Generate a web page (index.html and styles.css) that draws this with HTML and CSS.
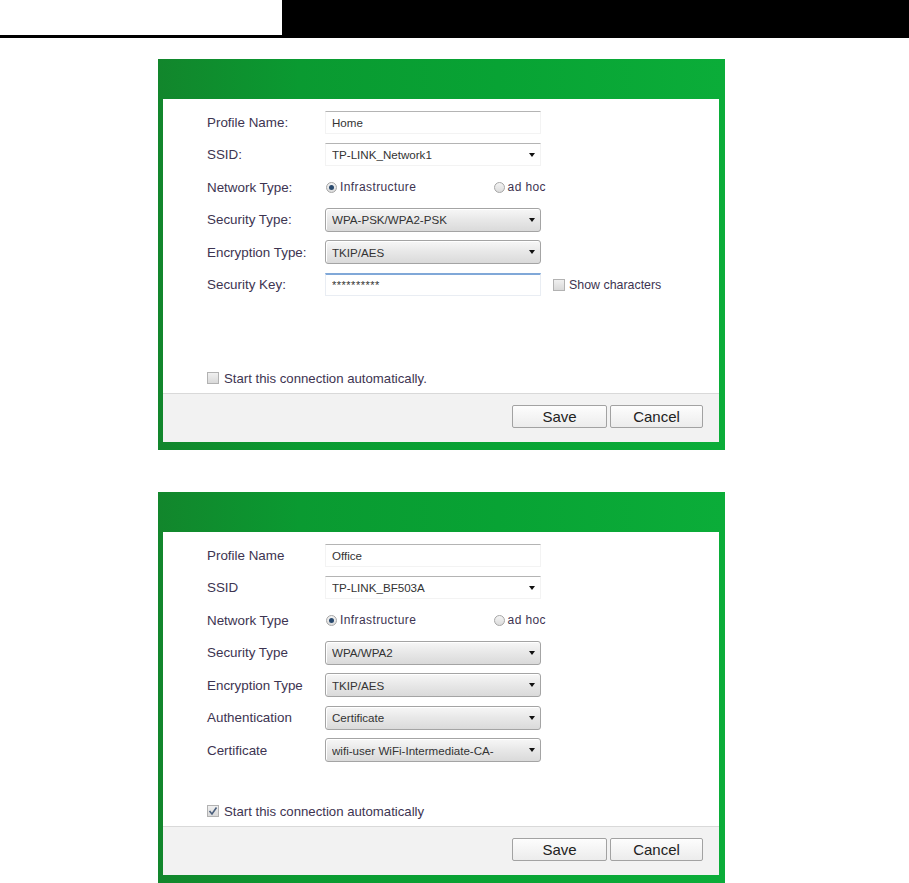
FILE: index.html
```html
<!DOCTYPE html>
<html lang="en">
<head>
    <meta charset="UTF-8">
    <title>Wireless Profile Settings</title>
    <link rel="stylesheet" href="styles.css">
</head>
<body>
    <!-- Page header strip -->
    <div class="doc-header">
        <div class="header-left"></div>
        <div class="header-bar"></div>
    </div>

    <!-- Profile: Home -->
    <div class="dialog">
        <div class="dialog-body">
            <div class="form-grid">
                <span class="label">Profile Name:</span>
                <div class="field field-text"><span class="value">Home</span></div>
                <span></span>

                <span class="label">SSID:</span>
                <div class="field field-text"><span class="value">TP-LINK_Network1</span><i class="arrow"></i></div>
                <span></span>

                <span class="label">Network Type:</span>
                <div class="radio-group">
                    <span class="radio-option"><i class="radio checked"></i>Infrastructure</span>
                    <span class="radio-option"><i class="radio"></i>ad hoc</span>
                </div>
                <span></span>

                <span class="label">Security Type:</span>
                <div class="field field-select"><span class="value">WPA-PSK/WPA2-PSK</span><i class="arrow"></i></div>
                <span></span>

                <span class="label">Encryption Type:</span>
                <div class="field field-select"><span class="value">TKIP/AES</span><i class="arrow"></i></div>
                <span></span>

                <span class="label">Security Key:</span>
                <div class="field field-key"><span class="value">**********</span></div>
                <span class="check-option side-option"><i class="checkbox"></i>Show characters</span>
            </div>

            <div class="check-option auto-start"><i class="checkbox"></i>Start this connection automatically.</div>
        </div>
        <div class="dialog-footer">
            <button class="btn btn-save">Save</button>
            <button class="btn btn-cancel">Cancel</button>
        </div>
    </div>

    <!-- Profile: Office -->
    <div class="dialog dialog-second">
        <div class="dialog-body">
            <div class="form-grid">
                <span class="label">Profile Name</span>
                <div class="field field-text"><span class="value">Office</span></div>
                <span></span>

                <span class="label">SSID</span>
                <div class="field field-text"><span class="value">TP-LINK_BF503A</span><i class="arrow"></i></div>
                <span></span>

                <span class="label">Network Type</span>
                <div class="radio-group">
                    <span class="radio-option"><i class="radio checked"></i>Infrastructure</span>
                    <span class="radio-option"><i class="radio"></i>ad hoc</span>
                </div>
                <span></span>

                <span class="label">Security Type</span>
                <div class="field field-select"><span class="value">WPA/WPA2</span><i class="arrow"></i></div>
                <span></span>

                <span class="label">Encryption Type</span>
                <div class="field field-select"><span class="value">TKIP/AES</span><i class="arrow"></i></div>
                <span></span>

                <span class="label">Authentication</span>
                <div class="field field-select"><span class="value">Certificate</span><i class="arrow"></i></div>
                <span></span>

                <span class="label">Certificate</span>
                <div class="field field-select"><span class="value">wifi-user WiFi-Intermediate-CA-</span><i class="arrow"></i></div>
                <span></span>
            </div>

            <div class="check-option auto-start">
                <i class="checkbox">
                    <svg width="10" height="10" viewBox="0 0 10 10"><polyline points="1.5,5 4,8 8.5,1.5" fill="none" stroke="#4b5f7c" stroke-width="1.6"/></svg>
                </i>Start this connection automatically
            </div>
        </div>
        <div class="dialog-footer">
            <button class="btn btn-save">Save</button>
            <button class="btn btn-cancel">Cancel</button>
        </div>
    </div>
</body>
</html>
```

FILE: styles.css
```css
/* Reset */
* {
    margin: 0;
    padding: 0;
    box-sizing: border-box;
}

body {
    background: #fff;
    font-family: 'Liberation Sans', Arial, sans-serif;
    color: #3d3451;
}

/* Header strip */
.doc-header {
    display: flex;
    height: 38px;
}

.header-left {
    width: 282px;
    border-bottom: 3px solid #000;
}

.header-bar {
    flex: 1;
    background: #000;
}

/* Dialog frame */
.dialog {
    width: 567px;
    height: 391px;
    margin: 21px 0 0 158px;
    padding: 40px 6px 8px 5px;
    display: flex;
    flex-direction: column;
    background: linear-gradient(to right, #12862c 0%, #0a9a31 25%, #08a334 60%, #0bad39 100%);
}

.dialog-second {
    margin-top: 42px;
}

.dialog-body {
    flex: 1;
    background: #fff;
    padding: 7px 0 7px 44px;
    display: flex;
    flex-direction: column;
}

/* Form rows */
.form-grid {
    display: grid;
    grid-template-columns: 118px 216px auto;
    grid-auto-rows: 32.5px;
    align-items: center;
}

.label {
    font-size: 13.4px;
    color: #3d3451;
    white-space: nowrap;
}

.field {
    width: 216px;
    height: 23px;
    display: flex;
    align-items: center;
    padding: 0 5px 0 6px;
    font-size: 11.6px;
    color: #333;
}

.field .value {
    flex: 1;
    min-width: 0;
    white-space: nowrap;
    overflow: hidden;
}

.field-text {
    background: #fff;
    border: 1px solid #f3f3f3;
    border-top-color: #b4b4b4;
}

.field-select {
    height: 24px;
    border: 1px solid #a4a4a4;
    border-radius: 3px;
    background: linear-gradient(to bottom, #f7f7f7 0%, #e9e9e9 45%, #dadada 100%);
    box-shadow: inset 1px 1px 0 #fff;
}

.field-key {
    background: #fff;
    border: 1px solid #e9edf3;
    border-top: 2px solid #80a8d8;
    font-size: 11px;
    letter-spacing: 0.5px;
}

.arrow {
    width: 0;
    height: 0;
    margin-left: 6px;
    border-left: 3.5px solid transparent;
    border-right: 3.5px solid transparent;
    border-top: 4px solid #111;
}

/* Radio options */
.radio-group {
    width: 221px;
    display: flex;
    justify-content: space-between;
    padding-left: 1px;
}

.radio-option {
    display: flex;
    align-items: center;
    gap: 3px;
    font-size: 12px;
    color: #3d3451;
    letter-spacing: 0.4px;
}

.radio {
    width: 11px;
    height: 11px;
    border-radius: 50%;
    border: 1px solid #a6a6a6;
    background: linear-gradient(#f4f4f4, #dcdcdc);
    display: flex;
    align-items: center;
    justify-content: center;
}

.radio.checked::after {
    content: "";
    width: 5px;
    height: 5px;
    border-radius: 50%;
    background: #2a4a6e;
}

/* Checkboxes */
.check-option {
    display: flex;
    align-items: center;
    gap: 5px;
    font-size: 12.4px;
    color: #3d3451;
    white-space: nowrap;
}

.side-option {
    margin-left: 12px;
    gap: 4px;
}

.checkbox {
    width: 12px;
    height: 12px;
    border: 1px solid #b2b2b2;
    background: linear-gradient(#f0f0f0, #d9d9d9);
    display: flex;
    align-items: center;
    justify-content: center;
}

.auto-start {
    margin-top: auto;
    height: 16px;
    font-size: 13.2px;
}

/* Footer with buttons */
.dialog-footer {
    height: 49px;
    background: #f2f2f2;
    border-top: 1px solid #d9d9d9;
    display: flex;
    justify-content: flex-end;
    align-items: flex-start;
    gap: 3px;
    padding: 11px 16px 0 0;
}

.btn {
    height: 23px;
    border: 1px solid #a2a2a2;
    border-radius: 2px;
    background: linear-gradient(#fdfdfd, #ececec);
    font-family: 'Liberation Sans', Arial, sans-serif;
    font-size: 15px;
    color: #222;
}

.btn-save {
    width: 95px;
}

.btn-cancel {
    width: 93px;
}
```
